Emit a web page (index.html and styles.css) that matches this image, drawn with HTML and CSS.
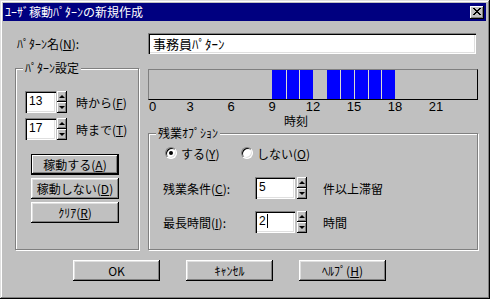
FILE: index.html
```html
<!DOCTYPE html>
<html lang="ja">
<head>
<meta charset="utf-8">
<title>ﾕｰｻﾞ稼動ﾊﾟﾀｰﾝの新規作成</title>
<link rel="stylesheet" href="styles.css">
</head>
<body>
<div class="window">
  <div class="titlebar">
    <span class="title">ﾕｰｻﾞ稼動ﾊﾟﾀｰﾝの新規作成</span>
    <span class="close"><svg width="8" height="7" viewBox="0 0 8 7" shape-rendering="crispEdges"><path d="M0 0h2v1H0zM6 0h2v1H6zM1 1h2v1H1zM5 1h2v1H5zM2 2h4v1H2zM3 3h2v1H3zM2 4h4v1H2zM1 5h2v1H1zM5 5h2v1H5zM0 6h2v1H0zM6 6h2v1H6z" fill="#000"/></svg></span>
  </div>
  <div class="content">
    <div class="name-row">
      <span class="name-label">ﾊﾟﾀｰﾝ名(<u>N</u>):</span>
      <div class="edit name-edit">事務員ﾊﾟﾀｰﾝ</div>
    </div>
    <div class="main">
      <fieldset class="group left-group">
        <legend>ﾊﾟﾀｰﾝ設定</legend>
        <div class="spin-row first-row">
          <div class="edit spin-edit">13</div>
          <span class="spin"><span class="spin-btn"><i class="arrow up"></i></span><span class="spin-btn"><i class="arrow down"></i></span></span>
          <span class="spin-label">時から(<u>F</u>)</span>
        </div>
        <div class="spin-row second-row">
          <div class="edit spin-edit">17</div>
          <span class="spin"><span class="spin-btn"><i class="arrow up"></i></span><span class="spin-btn"><i class="arrow down"></i></span></span>
          <span class="spin-label">時まで(<u>T</u>)</span>
        </div>
        <div class="side-buttons">
          <div class="btn default">稼動する(<u>A</u>)</div>
          <div class="btn">稼動しない(<u>D</u>)</div>
          <div class="btn">ｸﾘｱ(<u>R</u>)</div>
        </div>
      </fieldset>
      <div class="right-col">
        <div class="timeline">
          <span class="cell"></span><span class="cell"></span><span class="cell"></span><span class="cell"></span><span class="cell"></span><span class="cell"></span><span class="cell"></span><span class="cell"></span><span class="cell"></span>
          <span class="cell on"></span><span class="cell on sep"></span><span class="cell on sep"></span>
          <span class="cell"></span>
          <span class="cell on"></span><span class="cell on sep"></span><span class="cell on sep"></span><span class="cell on sep"></span><span class="cell on sep"></span>
          <span class="cell"></span><span class="cell"></span><span class="cell"></span><span class="cell"></span><span class="cell"></span><span class="cell"></span>
        </div>
        <div class="ticks">
          <span class="tick first"><span>0</span></span>
          <span class="tick"><span>3</span></span>
          <span class="tick"><span>6</span></span>
          <span class="tick"><span>9</span></span>
          <span class="tick"><span>12</span></span>
          <span class="tick"><span>15</span></span>
          <span class="tick"><span>18</span></span>
          <span class="tick"><span>21</span></span>
        </div>
        <div class="caption">時刻</div>
        <fieldset class="group right-group">
          <legend>残業ｵﾌﾟｼｮﾝ</legend>
          <div class="radio-row">
            <span class="radio-item"><span class="radio"><span class="dot"></span></span><span>する(<u>Y</u>)</span></span>
            <span class="radio-item"><span class="radio"></span><span>しない(<u>O</u>)</span></span>
          </div>
          <div class="field-row row-a">
            <span class="field-label">残業条件(<u>C</u>):</span>
            <div class="edit field-edit">5</div>
            <span class="spin"><span class="spin-btn"><i class="arrow up"></i></span><span class="spin-btn"><i class="arrow down"></i></span></span>
            <span class="unit">件以上滞留</span>
          </div>
          <div class="field-row row-b">
            <span class="field-label">最長時間(<u>I</u>):</span>
            <div class="edit field-edit">2<span class="caret"></span></div>
            <span class="spin"><span class="spin-btn"><i class="arrow up"></i></span><span class="spin-btn"><i class="arrow down"></i></span></span>
            <span class="unit">時間</span>
          </div>
        </fieldset>
      </div>
    </div>
    <div class="bottom-buttons">
      <div class="btn wide">OK</div>
      <div class="btn wide">ｷｬﾝｾﾙ</div>
      <div class="btn wide">ﾍﾙﾌﾟ(<u>H</u>)</div>
    </div>
  </div>
</div>
</body>
</html>
```
FILE: styles.css
```css
* { box-sizing: border-box; }
html, body { margin: 0; padding: 0; }
body {
  width: 490px;
  height: 299px;
  overflow: hidden;
  background: #c0c0c0;
  font-family: "Noto Sans CJK JP", "Liberation Sans", sans-serif;
  font-size: 12px;
  color: #000;
}
u { text-decoration: underline; text-underline-offset: 1px; }

.window {
  width: 490px;
  height: 299px;
  padding: 3px 4px 3px 3px;
  background: #c0c0c0;
  box-shadow: inset -1px -1px #000, inset 1px 1px #dfdfdf, inset -2px -2px #808080, inset 2px 2px #fff;
  display: flex;
  flex-direction: column;
}

.titlebar {
  height: 18px;
  background: #000080;
  color: #fff;
  display: flex;
  align-items: center;
  justify-content: space-between;
  padding: 0 2px 0 2px;
}
.title { line-height: 18px; white-space: nowrap; }
.close {
  width: 14px;
  height: 13px;
  background: #c0c0c0;
  box-shadow: inset -1px -1px #000, inset 1px 1px #fff, inset -2px -2px #808080;
  display: flex;
  align-items: center;
  justify-content: center;
  padding-bottom: 1px;
}
.close svg { display: block; }

.content { padding: 12px 0 0 12px; }

.edit {
  background: #fff;
  box-shadow: inset 1px 1px #808080, inset 2px 2px #000, inset -1px -1px #fff, inset -2px -2px #dfdfdf;
}

.name-row { display: flex; height: 21px; align-items: center; }
.name-label { width: 133px; padding-left: 2px; white-space: nowrap; }
.name-edit {
  width: 328px;
  height: 21px;
  font-size: 13px;
  line-height: 21px;
  padding-left: 5px;
}

.main { display: flex; gap: 9px; margin-top: 8px; height: 188px; }

.group {
  margin: 0;
  padding: 0;
  min-width: 0;
  border: 1px solid #808080;
  box-shadow: inset 1px 1px #fff, 1px 1px #fff;
}
.group legend {
  padding: 0 2px;
  margin-left: 7px;
  line-height: 12px;
  height: 12px;
  background: #c0c0c0;
  white-space: nowrap;
}
.left-group { width: 124px; }

.spin-row { display: flex; align-items: center; height: 22px; margin-left: 9px; }
.first-row { margin-top: 17px; }
.second-row { margin-top: 5px; }
.spin-edit {
  width: 31px;
  height: 22px;
  padding: 3px 0 0 4px;
  font-family: "Liberation Sans", sans-serif;
  font-size: 12px;
  line-height: 14px;
}
.spin {
  display: flex;
  flex-direction: column;
  width: 10px;
  height: 22px;
  margin-left: 1px;
}
.spin-btn {
  flex: 1;
  background: #c0c0c0;
  box-shadow: inset -1px -1px #000, inset 1px 1px #fff, inset -2px -2px #808080;
  display: flex;
  align-items: center;
  justify-content: center;
}
.arrow { width: 0; height: 0; border-left: 3px solid transparent; border-right: 3px solid transparent; }
.arrow.up { border-bottom: 3px solid #000; }
.arrow.down { border-top: 3px solid #000; }
.spin-label { margin-left: 9px; white-space: nowrap; }

.side-buttons {
  display: flex;
  flex-direction: column;
  gap: 3px;
  margin: 14px 0 0 15px;
}
.btn {
  width: 88px;
  height: 21px;
  background: #c0c0c0;
  box-shadow: inset -1px -1px #000, inset 1px 1px #fff, inset -2px -2px #808080, inset 2px 2px #dfdfdf;
  display: flex;
  align-items: center;
  justify-content: center;
  white-space: nowrap;
  line-height: 12px;
}
.btn.default {
  box-shadow: inset 0 0 0 1px #000, inset -2px -2px #000, inset 2px 2px #fff, inset -3px -3px #808080;
}

.right-col { width: 330px; display: flex; flex-direction: column; }
.timeline {
  margin-top: 7px;
  height: 31px;
  display: grid;
  grid-template-columns: repeat(24, 1fr);
  border: 1px solid #000;
  border-top-color: #808080;
  border-left-color: #808080;
  background: #c0c0c0;
}
.cell.on { background: #0000ff; }
.cell.sep { box-shadow: inset 1px 0 #d8d8d0; }

.ticks {
  display: grid;
  grid-template-columns: repeat(8, 1fr);
  width: 328px;
  margin-left: 1px;
  height: 14px;
  line-height: 14px;
  font-family: "Liberation Sans", sans-serif;
  font-size: 13px;
}
.tick span { display: inline-block; transform: translateX(-50%); }
.tick.first span { transform: none; }

.caption { height: 13px; line-height: 13px; padding-left: 136px; }

.right-group { flex: 1; }
.radio-row { display: flex; align-items: center; height: 14px; margin: 7px 0 0 16px; }
.radio-item { display: flex; align-items: center; gap: 4px; width: 76px; white-space: nowrap; }
.radio {
  width: 12px;
  height: 12px;
  border-radius: 50%;
  background: #fff;
  border: 1px solid;
  border-color: #808080 #fff #fff #808080;
  box-shadow: inset 1px 1px #000, inset -1px -1px #dfdfdf;
  display: flex;
  align-items: center;
  justify-content: center;
}
.dot { width: 4px; height: 4px; border-radius: 50%; background: #000; }

.field-row { display: flex; align-items: center; height: 22px; margin-left: 14px; }
.row-a { margin-top: 17px; }
.row-b { margin-top: 12px; }
.field-label { width: 92px; white-space: nowrap; }
.field-edit {
  width: 40px;
  height: 22px;
  padding: 3px 0 0 4px;
  font-family: "Liberation Sans", sans-serif;
  font-size: 12px;
  line-height: 14px;
  display: flex;
  align-items: flex-start;
}
.field-row .spin { margin-left: 2px; }
.caret { display: inline-block; width: 1px; height: 14px; background: #000; margin-left: 1px; }
.unit { margin-left: 16px; white-space: nowrap; }

.bottom-buttons { display: flex; gap: 26px; margin: 10px 0 0 58px; }
.btn.wide { width: 87px; }
```
